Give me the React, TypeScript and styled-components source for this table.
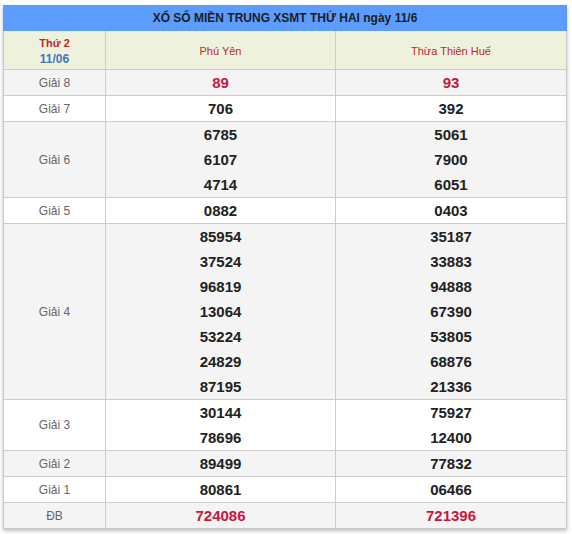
import React from "react";
import styled, { createGlobalStyle } from "styled-components";

const Global = createGlobalStyle`
  html, body { margin: 0; padding: 0; background: #fff; }
  body { font-family: "Liberation Sans", Arial, sans-serif; }
`;

const Page = styled.div`
  padding: 5px 5px 6px 3px;
  width: 564px;
`;

const Table = styled.div`
  border: 1px solid #c8c8c8;
  border-top: none;
  box-shadow: 0 2px 4px rgba(0, 0, 0, 0.25);
  background: #fff;
`;

const Title = styled.div`
  height: 26px;
  background: #5b9cfd;
  color: #1d1d1d;
  font-weight: bold;
  font-size: 12px;
  display: flex;
  align-items: center;
  justify-content: center;
  margin: 0 -1px;
`;

const Row = styled.div<{ $bg: string; $top?: boolean }>`
  display: grid;
  grid-template-columns: 102px 230px 1fr;
  background: ${(p) => p.$bg};
  border-top: ${(p) => (p.$top ? "none" : "1px solid #cccccc")};
`;

const Cell = styled.div<{ $last?: boolean }>`
  display: flex;
  flex-direction: column;
  align-items: center;
  justify-content: center;
  border-right: ${(p) => (p.$last ? "none" : "1px solid #cccccc")};
`;

const HeadCell = styled(Cell)`
  height: 38px;
  padding-top: 2px;
  box-sizing: border-box;
`;

const Day = styled.div`
  font-size: 11px;
  font-weight: bold;
  color: #c0262e;
  line-height: 16px;
`;

const DateText = styled.div`
  font-size: 12px;
  font-weight: bold;
  color: #3f78bf;
  line-height: 16px;
`;

const Province = styled.div`
  font-size: 11px;
  color: #c0262e;
`;

const Label = styled.div`
  font-size: 12px;
  color: #666;
`;

const Num = styled.div<{ $red?: boolean }>`
  height: 25px;
  line-height: 25px;
  font-size: 15px;
  font-weight: bold;
  color: ${(p) => (p.$red ? "#c8173c" : "#222")};
`;

type Prize = { label: string; a: string[]; b: string[]; red?: boolean };

const prizes: Prize[] = [
  { label: "Giải 8", a: ["89"], b: ["93"], red: true },
  { label: "Giải 7", a: ["706"], b: ["392"] },
  { label: "Giải 6", a: ["6785", "6107", "4714"], b: ["5061", "7900", "6051"] },
  { label: "Giải 5", a: ["0882"], b: ["0403"] },
  {
    label: "Giải 4",
    a: ["85954", "37524", "96819", "13064", "53224", "24829", "87195"],
    b: ["35187", "33883", "94888", "67390", "53805", "68876", "21336"],
  },
  { label: "Giải 3", a: ["30144", "78696"], b: ["75927", "12400"] },
  { label: "Giải 2", a: ["89499"], b: ["77832"] },
  { label: "Giải 1", a: ["80861"], b: ["06466"] },
  { label: "ĐB", a: ["724086"], b: ["721396"], red: true },
];

export default function App() {
  return (
    <Page>
      <Global />
      <Table>
        <Title>XỔ SỐ MIỀN TRUNG XSMT THỨ HAI ngày 11/6</Title>
        <Row $bg="#eef2dd" $top>
          <HeadCell>
            <Day>Thứ 2</Day>
            <DateText>11/06</DateText>
          </HeadCell>
          <HeadCell>
            <Province>Phú Yên</Province>
          </HeadCell>
          <HeadCell $last>
            <Province>Thừa Thiên Huế</Province>
          </HeadCell>
        </Row>
        {prizes.map((p, i) => (
          <Row key={p.label} $bg={i % 2 === 0 ? "#f4f4f4" : "#ffffff"}>
            <Cell>
              <Label>{p.label}</Label>
            </Cell>
            <Cell>
              {p.a.map((n, j) => (
                <Num key={j} $red={p.red}>
                  {n}
                </Num>
              ))}
            </Cell>
            <Cell $last>
              {p.b.map((n, j) => (
                <Num key={j} $red={p.red}>
                  {n}
                </Num>
              ))}
            </Cell>
          </Row>
        ))}
      </Table>
    </Page>
  );
}
